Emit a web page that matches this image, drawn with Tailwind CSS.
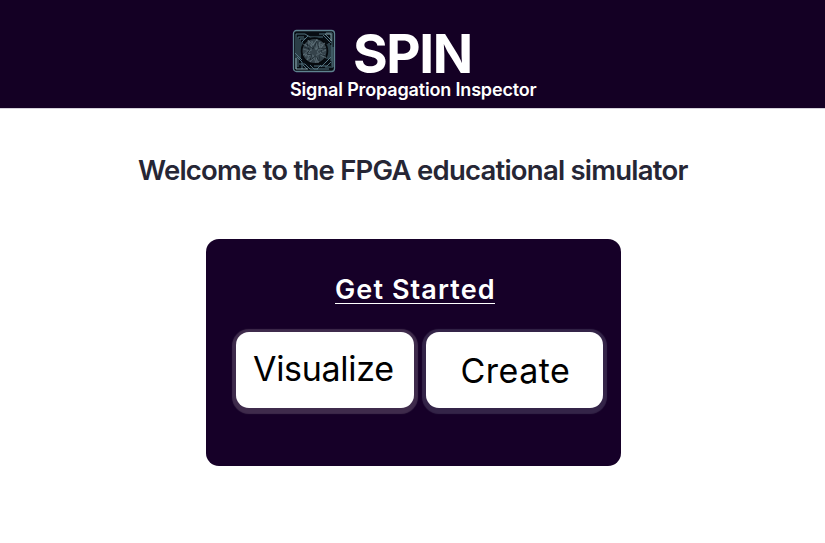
<!DOCTYPE html>
<html lang="en">
<head>
<meta charset="utf-8">
<title>SPIN</title>
<script src="https://cdn.jsdelivr.net/npm/@tailwindcss/browser@4"></script>
</head>
<body class="bg-white font-['Inter',sans-serif] w-[825px] h-[543px] overflow-hidden">
<header class="h-[109px] bg-[#140024] border-b border-[#d5d0da] pl-[290px] pt-[29px] text-white">
  <div class="flex items-start h-[49px] pl-[2px]">
    <svg class="w-[44px] h-[44px] shrink-0" viewBox="0 0 44 44" fill="none">
      <rect x="1.5" y="1.5" width="41" height="41" rx="3" fill="#070d13" stroke="#5f8290" stroke-width="1.3"/>
      <g stroke="#5a7b88" stroke-width=".9">
        <path d="M4 40V5h9l5 3h13M6 38V8h6M8 30V10h5l3-3M10 26V13l4-4M5 28l5 5v7M7 35h6l5 5h8M3 24l7 7M15 40l-4-4M18 36l4 4h15M22 37h13l4-4M29 38l10-10M34 4h6v8l-6-6M27 5h6l7 7v25M37 14v16l-4 4M39 16v16M35 15v15M31 6l8 8M41 18v20h-8M25 40l4-4"/>
      </g>
      <path d="M4 29v11h12M33 5h6v7" stroke="#94b0b8" stroke-width=".9"/>
      <circle cx="22.5" cy="22" r="13.8" fill="#05090d"/>
      <circle cx="22.5" cy="22" r="12" fill="#35434b"/>
      <g stroke="#65777f" stroke-width=".6">
        <path d="M11 20l7 2-5 5 8-1-3 7 6-6 2 7 2-8 6 3-4-6 4-2-6-1 5-6-7 3-1-7-4 6-5-5 1 7-6-3"/>
        <path d="M13 15l6 7 1-10 4 9 4-8-1 8 7-3-6 6 5 2-8-1-1 9-3-8-6 5 3-7-7 2 6-5M17 12l2 6 6-7-1 9 7-4-6 7 7 5"/>
      </g>
      <path d="M12 18l6 2-3 5 5 1-2 5 6-4 3 5 1-7 5 2-4-5 5-3-7 1-2-8-4 8-6-5 2 6" stroke="#111c23" stroke-width=".65"/>
    </svg>
    <h1 class="ml-[17px] pt-px text-[53px] leading-[49px] font-bold whitespace-nowrap tracking-[-1.4px]">SPIN</h1>
  </div>
  <p class="text-[18px] leading-[23px] font-semibold whitespace-nowrap tracking-[-0.16px]">Signal Propagation Inspector</p>
</header>
<main>
  <h2 class="pl-[138px] pt-[41px] h-[130px] text-[27.5px] leading-[40px] font-semibold text-[#262635] tracking-[-0.77px] whitespace-nowrap">Welcome to the FPGA educational simulator</h2>
  <section class="ml-[206px] w-[415px] h-[227px] rounded-[13px] bg-[#160028] pt-[31px]">
    <h3 class="ml-[129px] w-[160px] h-[34px] border-b border-white text-white text-[27px] leading-[40px] font-semibold whitespace-nowrap tracking-[1.1px]">Get Started</h3>
    <div class="flex gap-[12px] pl-[30px] mt-[28px]">
      <button class="w-[178px] h-[76px] rounded-[13px] bg-white text-black text-[34px] leading-[74px] pb-[2px] text-left pl-[17px] font-normal tracking-[-0.3px] whitespace-nowrap shadow-[0_1.5px_1px_4px_#3f2b4c]">Visualize</button>
      <button class="w-[177px] h-[76px] rounded-[13px] bg-white text-black text-[34px] leading-[76px] pt-[1px] text-left pl-[34.5px] font-normal tracking-[0.5px] whitespace-nowrap shadow-[0_1.5px_1px_4px_#342448]">Create</button>
    </div>
  </section>
</main>
</body>
</html>
